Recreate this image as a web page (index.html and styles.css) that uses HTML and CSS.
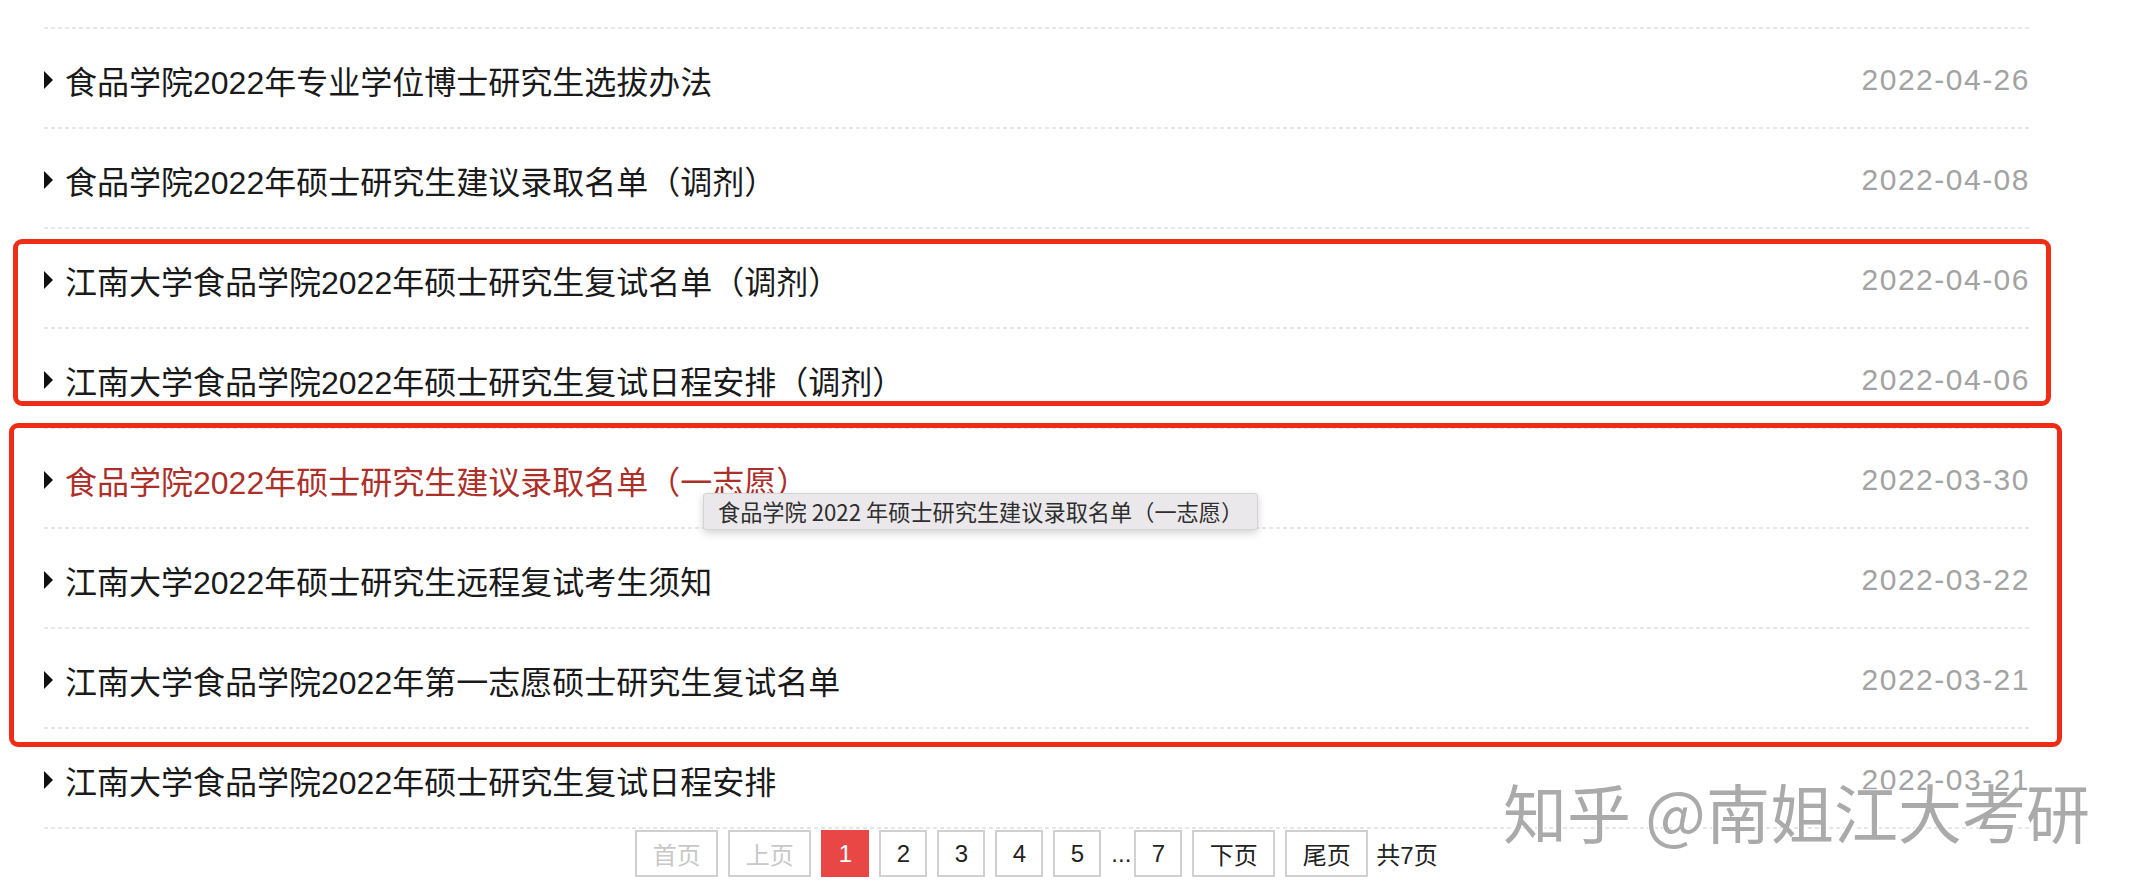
FILE: index.html
```html
<!DOCTYPE html>
<html lang="zh-CN">
<head>
  <meta charset="UTF-8">
  <title>通知公告</title>
  <link rel="stylesheet" href="styles.css">
</head>
<body>

<div class="news">
  <ul class="list">
    <li class="cut"></li>
    <li><a href="#">食品学院2022年专业学位博士研究生选拔办法</a><span class="date">2022-04-26</span></li>
    <li><a href="#">食品学院2022年硕士研究生建议录取名单（调剂）</a><span class="date">2022-04-08</span></li>
    <li><a href="#">江南大学食品学院2022年硕士研究生复试名单（调剂）</a><span class="date">2022-04-06</span></li>
    <li><a href="#">江南大学食品学院2022年硕士研究生复试日程安排（调剂）</a><span class="date">2022-04-06</span></li>
    <li><a href="#" class="hover">食品学院2022年硕士研究生建议录取名单（一志愿）</a><span class="date">2022-03-30</span></li>
    <li><a href="#">江南大学2022年硕士研究生远程复试考生须知</a><span class="date">2022-03-22</span></li>
    <li><a href="#">江南大学食品学院2022年第一志愿硕士研究生复试名单</a><span class="date">2022-03-21</span></li>
    <li><a href="#">江南大学食品学院2022年硕士研究生复试日程安排</a><span class="date">2022-03-21</span></li>
  </ul>

  <div class="pager">
    <span class="btn wide off">首页</span>
    <span class="btn wide off">上页</span>
    <span class="btn cur">1</span>
    <a class="btn" href="#">2</a>
    <a class="btn" href="#">3</a>
    <a class="btn" href="#">4</a>
    <a class="btn" href="#">5</a>
    <span class="dots">...</span>
    <a class="btn" href="#">7</a>
    <a class="btn wide" href="#">下页</a>
    <a class="btn wide" href="#">尾页</a>
    <span class="total">共7页</span>
  </div>
</div>

<!-- annotations drawn over the screenshot -->
<div class="mark mark-a"></div>
<div class="mark mark-b"></div>

<div class="tip">食品学院 2022 年硕士研究生建议录取名单（一志愿）</div>

<div class="watermark">知乎 @南姐江大考研</div>

</body>
</html>
```

FILE: styles.css
```css
body { margin: 0; background: #fff; font-family: "Liberation Sans", "Noto Sans CJK SC", sans-serif; }

.news { width: 1985px; padding-left: 44px; }

.list { list-style: none; margin: 0; padding: 0; }
.list li {
  display: flex; align-items: center;
  height: 100px; box-sizing: border-box; padding-top: 2px;
  background: repeating-linear-gradient(90deg, #e6e6e6 0 4px, transparent 4px 7px) left bottom / 100% 2px no-repeat;
}
.list li.cut { height: 29px; padding: 0; }
.list li::before {
  content: ""; width: 0; height: 0;
  border-left: 9px solid #111;
  border-top: 9px solid transparent;
  border-bottom: 9px solid transparent;
  margin-right: 12px;
}
.list li.cut::before { display: none; }
.list a { color: #1a1a1a; text-decoration: none; font-size: 32px; }
.list a.hover { color: #ad2f2a; }
.date { margin-left: auto; color: #a3a3a3; font-size: 30px; letter-spacing: 1.5px; margin-right: -1px; }

.pager { display: flex; justify-content: center; align-items: center; gap: 10px; padding-top: 1px; font-size: 24px; }
.btn {
  width: 48px; height: 47px; box-sizing: border-box;
  border: 2px solid #d0d0d0;
  display: flex; align-items: center; justify-content: center;
  color: #222; text-decoration: none;
}
.btn.wide { width: 83px; }
.btn.off { color: #c8c8c8; }
.btn.cur { background: #e94646; border-color: #e94646; color: #fff; }
.dots { color: #222; margin-right: -7px; }
.total { color: #222; margin-left: -2px; }

.mark { position: absolute; border: 5px solid #ef2c16; border-radius: 9px; box-sizing: border-box; }
.mark-a { left: 13px; top: 239px; width: 2038px; height: 167px; }
.mark-b { left: 9px; top: 423px; width: 2053px; height: 324px; }

.tip {
  position: absolute; left: 703px; top: 493px;
  height: 37px; line-height: 35px; box-sizing: border-box;
  padding: 0 14px;
  background: #ebe8eb; border: 1px solid #d6d3d6; border-radius: 3px;
  box-shadow: 0 3px 8px rgba(0, 0, 0, 0.18);
  font-family: "Noto Sans CJK SC", sans-serif; font-size: 22.2px; color: #2e2e2e;
}

.watermark {
  position: absolute; left: 1503px; top: 764px;
  font-family: "Noto Sans CJK SC", sans-serif; font-size: 64px; color: #aaa;
  text-shadow: 2px 2px 0 #fff, -1px -1px 0 #fff;
  white-space: nowrap;
}
```
